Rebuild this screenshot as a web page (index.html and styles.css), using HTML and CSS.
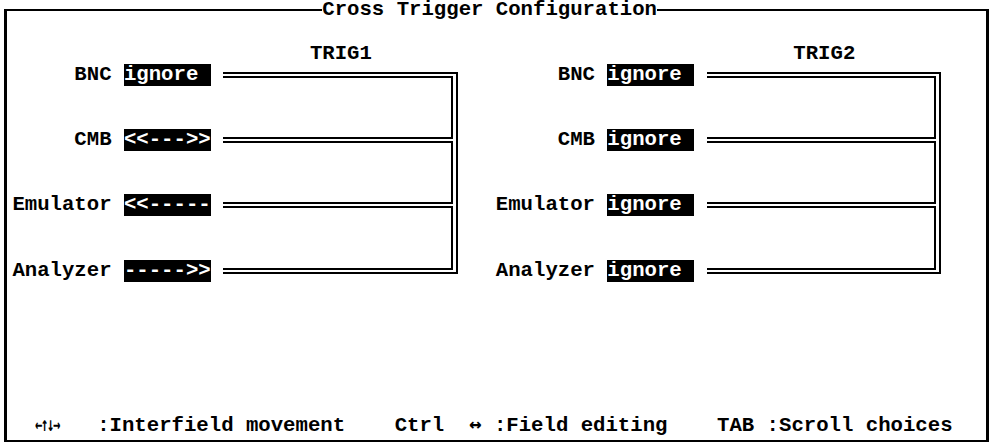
FILE: index.html
```
<!DOCTYPE html>
<html>
<head>
  <meta charset="utf-8">
  <title>Cross Trigger Configuration</title>
  <link rel="stylesheet" href="styles.css">
</head>
<body>
  <fieldset class="frame">
    <legend>Cross Trigger Configuration</legend>

    <div class="panels">
      <!-- TRIG1 -->
      <section class="panel">
        <h2 class="panel-title">TRIG1</h2>
        <div class="links">
          <div class="bus"></div>
          <div class="tap tap-2"></div>
          <div class="tap tap-3"></div>
          <span class="label">BNC</span><span class="field">ignore</span>
          <span class="label">CMB</span><span class="field">&lt;&lt;---&gt;&gt;</span>
          <span class="label">Emulator</span><span class="field">&lt;&lt;-----</span>
          <span class="label">Analyzer</span><span class="field">-----&gt;&gt;</span>
        </div>
      </section>

      <!-- TRIG2 -->
      <section class="panel">
        <h2 class="panel-title">TRIG2</h2>
        <div class="links">
          <div class="bus"></div>
          <div class="tap tap-2"></div>
          <div class="tap tap-3"></div>
          <span class="label">BNC</span><span class="field">ignore</span>
          <span class="label">CMB</span><span class="field">ignore</span>
          <span class="label">Emulator</span><span class="field">ignore</span>
          <span class="label">Analyzer</span><span class="field">ignore</span>
        </div>
      </section>
    </div>

    <p class="keys"><kbd class="arrows">←↑↓→</kbd>:Interfield movement    Ctrl <kbd class="pair">↔</kbd> :Field editing    TAB :Scroll choices</p>
  </fieldset>
</body>
</html>
```

FILE: styles.css
```
* {
  box-sizing: border-box;
}
html, body {
  margin: 0;
  background: #fff;
}
body {
  width: 992px;
  height: 445px;
  overflow: hidden;
  color: #000;
  font: bold 20.67px/22px "Liberation Mono", "DejaVu Sans Mono", monospace;
}

/* outer box, 1ch = one text cell (12.4px) */
.frame {
  display: flex;
  flex-direction: column;
  height: 442px;
  min-width: 0;
  margin: 0 3px 0 4px;
  padding: 0 0 0 5.4px;
  border: 2px solid #000;
  border-left-width: 3px;
  border-right-width: 3px;
}
.frame legend {
  margin-left: 25ch;
  padding: 0;
  line-height: 19px;
}

.panels {
  display: grid;
  grid-template-columns: 39ch 39ch;
  margin-top: 24px;
}
.panel-title {
  margin: 0 0 0 24ch;
  font: inherit;
  line-height: 21px;
}

.links {
  display: grid;
  grid-template-columns: 8ch 7ch 19ch;
  grid-template-rows: repeat(4, 22px);
  column-gap: 1ch;
  row-gap: 43.2px;
}
.label {
  text-align: right;
  white-space: pre;
}
.field {
  background: #000;
  color: #fff;
  white-space: pre;
}

/* double-line wiring */
.bus {
  grid-column: 3;
  grid-row: 1 / -1;
  margin: 8px 1px 8px 0;
  border: 6px double #000;
  border-left: 0;
  border-right-width: 7px;
}
.tap {
  grid-column: 3;
  align-self: center;
  height: 6px;
  margin-right: 6px;
  border-top: 6px double #000;
  background: #fff;
}
.tap-2 { grid-row: 2; }
.tap-3 { grid-row: 3; }

.keys {
  margin: auto 0 3px 0;
  padding-left: 2ch;
  white-space: pre;
}
.keys kbd {
  display: inline-block;
  font: inherit;
  font-family: "DejaVu Sans Mono", monospace;
}
/* the four arrow keys are squeezed into narrow glyphs, as on the text screen */
.keys .arrows {
  width: 62px;
  margin-left: -2px;
  font-size: 20px;
  letter-spacing: -2px;
  transform: scaleX(0.6);
  transform-origin: left center;
}
.keys .pair {
  width: 2ch;
  text-align: right;
}
```
